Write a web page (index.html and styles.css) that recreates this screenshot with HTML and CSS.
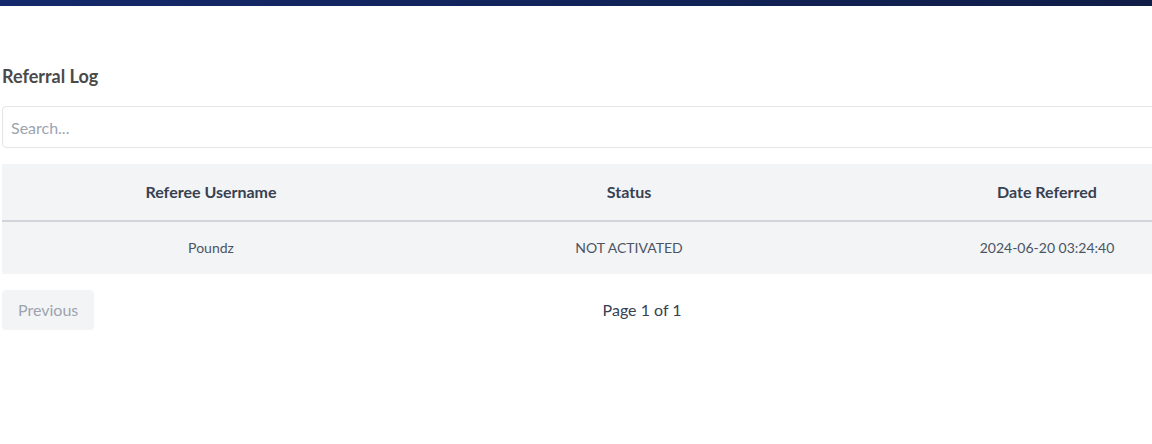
FILE: index.html
```html
<!DOCTYPE html>
<html lang="en">
<head>
<meta charset="utf-8">
<title>Referral Log</title>
<link rel="stylesheet" href="styles.css">
</head>
<body>
<div class="topbar"></div>
<main class="page">
  <h2 class="title">Referral Log</h2>
  <input class="search" type="text" placeholder="Search...">
  <table class="log">
    <thead>
      <tr>
        <th>Referee Username</th>
        <th>Status</th>
        <th>Date Referred</th>
      </tr>
    </thead>
    <tbody>
      <tr>
        <td>Poundz</td>
        <td>NOT ACTIVATED</td>
        <td>2024-06-20 03:24:40</td>
      </tr>
    </tbody>
  </table>
  <div class="pager">
    <button class="btn" disabled>Previous</button>
    <span class="pageinfo">Page 1 of 1</span>
    <button class="btn btn-hidden" disabled>Next</button>
  </div>
</main>
</body>
</html>
```
FILE: styles.css
```css
html, body {
  margin: 0;
  padding: 0;
  overflow: hidden;
  background: #ffffff;
  font-family: Lato, "Liberation Sans", sans-serif;
}
.topbar {
  height: 6px;
  background: linear-gradient(90deg, #14296b 0%, #0f1d47 100%);
}
.page {
  width: 1254px;
  margin-left: 2px;
  padding-top: 56px;
  display: flex;
  flex-direction: column;
}
.title {
  margin: 0;
  font-size: 18px;
  line-height: 28px;
  font-weight: 700;
  color: #4a4a4a;
}
.search {
  margin-top: 16px;
  box-sizing: border-box;
  height: 42px;
  width: 100%;
  padding: 8px 8px;
  border: 1px solid #e5e5e5;
  border-radius: 4px;
  font-family: inherit;
  font-size: 16px;
  color: #374151;
  outline: none;
}
.search::placeholder {
  color: #9ca3af;
}
.log {
  margin-top: 16px;
  width: 100%;
  border-collapse: collapse;
  table-layout: fixed;
  background: #f3f4f6;
}
.log th {
  padding: 16px;
  font-size: 16px;
  line-height: 24px;
  font-weight: 700;
  color: #374151;
  text-align: center;
  border-bottom: 2px solid #d1d5db;
}
.log td {
  padding: 16px;
  font-size: 14px;
  line-height: 20px;
  color: #4b5563;
  text-align: center;
}
.pager {
  margin-top: 16px;
  display: flex;
  justify-content: space-between;
  align-items: center;
}
.btn {
  padding: 8px 16px;
  font-family: inherit;
  font-size: 16px;
  line-height: 24px;
  background: #f3f4f6;
  color: #9ca3af;
  border: none;
  border-radius: 4px;
}
.btn-hidden {
  visibility: hidden;
}
.pageinfo {
  font-size: 16px;
  line-height: 24px;
  color: #374151;
}
```
